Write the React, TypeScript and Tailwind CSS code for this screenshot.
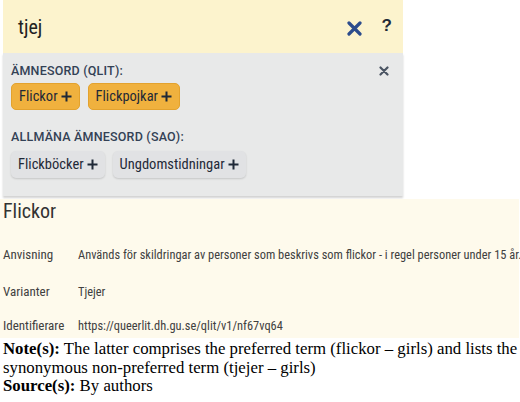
const cond = "[font-family:Roboto,sans-serif] font-stretch-condensed";

const Plus = () => (
    <svg width="11" height="11" viewBox="0 0 11 11" className="ml-[3px]">
        <path d="M5.5 0.5v10M0.5 5.5h10" stroke="#1f2937" strokeWidth="2"/>
    </svg>
);

const Chip = ({label, primary}: { label: string; primary?: boolean }) => (
    <div
        className={`${cond} flex items-center h-[27px] px-[7px] rounded-[5px] text-[14.5px] text-[#1f2937] ${primary ? "bg-[#f0b13e] border border-[#e3a22e]" : "bg-[#e1e2e4] shadow-[0_1px_2px_rgba(0,0,0,0.15)]"}`}>
        {label}
        <Plus/>
    </div>
);

const Row = ({label, value, className}: { label: string; value: string; className: string }) => (
    <div className={`flex items-center h-[18px] text-[13px] text-[#404040] whitespace-nowrap ${className}`}>
        <div className="w-[75px] shrink-0">{label}</div>
        <div className="text-[12.4px]">{value}</div>
    </div>
);

export default function App() {
    return (
        <div className="w-[520px] h-[402px] bg-white overflow-hidden">
            <div className="ml-[3px] w-[400px]">
                {/* search field */}
                <div className="h-[53px] bg-[#fcf3cd] flex items-center pl-[15px] pr-[11px]">
                    <div className={`${cond} flex-1 text-[20px] text-[#222]`}>tjej</div>
                    <svg width="15" height="15" viewBox="0 0 15 15" className="mr-[20px] mt-[3px]">
                        <path d="M2 2L13 13M13 2L2 13" stroke="#2c4c8c" strokeWidth="3.2" strokeLinecap="round"/>
                    </svg>
                    <div className="[font-family:'Liberation_Sans',sans-serif] text-[17px] font-bold text-[#1f2937] pb-[2px]">?</div>
                </div>

                {/* suggestions dropdown */}
                <div className="h-[143px] bg-[#e8e9e9] shadow-[0_2px_2px_rgba(0,0,0,0.18)] px-[8px] pt-[10px] [font-family:Roboto,sans-serif]">
                    <div className="flex items-center justify-between">
                        <div className="text-[12.5px] leading-[15px] font-medium text-[#334155] tracking-[0.2px]">ÄMNESORD (QLIT):</div>
                        <svg width="10" height="10" viewBox="0 0 10 10" className="mr-[6px]">
                            <path d="M1.5 1.5L8.5 8.5M8.5 1.5L1.5 8.5" stroke="#4b5563" strokeWidth="2.2"
                                  strokeLinecap="round"/>
                        </svg>
                    </div>
                    <div className="flex gap-[8px] mt-[5px]">
                        <Chip label="Flickor" primary/>
                        <Chip label="Flickpojkar" primary/>
                    </div>
                    <div className="text-[12.5px] leading-[15px] font-medium text-[#334155] tracking-[0.2px] mt-[19px]">ALLMÄNA ÄMNESORD (SAO):</div>
                    <div className="flex gap-[8px] mt-[7px]">
                        <Chip label="Flickböcker"/>
                        <Chip label="Ungdomstidningar"/>
                    </div>
                </div>
            </div>

            {/* term details */}
            <div className={`${cond} mt-[3px] w-[519px] h-[139px] bg-[#fefaec] pl-[3px] pt-[1px]`}>
                <div className="text-[20px] text-[#333] leading-[22px]">Flickor</div>
                <Row className="mt-[24px]" label="Anvisning"
                     value="Används för skildringar av personer som beskrivs som flickor - i regel personer under 15 år."/>
                <Row className="mt-[19px]" label="Varianter" value="Tjejer"/>
                <Row className="mt-[16px]" label="Identifierare" value="https://queerlit.dh.gu.se/qlit/v1/nf67vq64"/>
            </div>

            {/* caption */}
            <div className="mt-[2px] px-[3px] text-[16.8px] leading-[18.5px] text-black whitespace-nowrap [font-family:'Liberation_Serif',serif]">
                <p><b>Note(s):</b> The latter comprises the preferred term (flickor – girls) and lists the<br/>
                    synonymous non-preferred term (tjejer – girls)</p>
                <p><b>Source(s):</b> By authors</p>
            </div>
        </div>
    );
}
